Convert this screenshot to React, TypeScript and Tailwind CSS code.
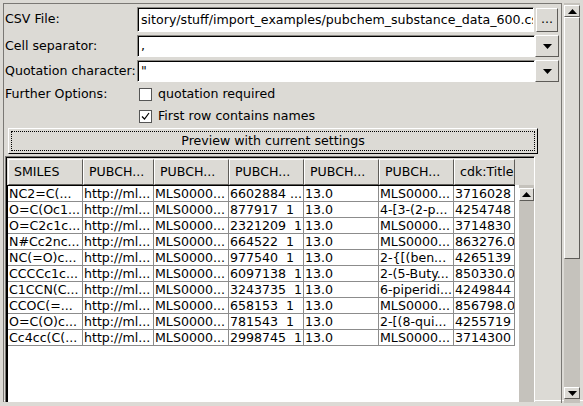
import React from "react";

const cols = [75, 71, 75, 75, 75, 75, 61];
const heads = ["SMILES", "PUBCH...", "PUBCH...", "PUBCH...", "PUBCH...", "PUBCH...", "cdk:Title"];

const rows = [
  ["NC2=C(...", "http://ml...", "MLS0000...", "6602884 ...", "13.0", "MLS0000...", "3716028"],
  ["O=C(Oc1...", "http://ml...", "MLS0000...", "877917  1", "13.0", "4-[3-(2-p...", "4254748"],
  ["O=C2c1c...", "http://ml...", "MLS0000...", "2321209  1", "13.0", "MLS0000...", "3714830"],
  ["N#Cc2nc...", "http://ml...", "MLS0000...", "664522  1", "13.0", "MLS0000...", "863276.0"],
  ["NC(=O)c...", "http://ml...", "MLS0000...", "977540  1", "13.0", "2-{[(ben...", "4265139"],
  ["CCCCc1c...", "http://ml...", "MLS0000...", "6097138  1", "13.0", "2-(5-Buty...", "850330.0"],
  ["C1CCN(C...", "http://ml...", "MLS0000...", "3243735  1", "13.0", "6-piperidi...", "4249844"],
  ["CCOC(=...", "http://ml...", "MLS0000...", "658153  1", "13.0", "MLS0000...", "856798.0"],
  ["O=C(O)c...", "http://ml...", "MLS0000...", "781543  1", "13.0", "2-[(8-qui...", "4255719"],
  ["Cc4cc(C(...", "http://ml...", "MLS0000...", "2998745  1", "13.0", "MLS0000...", "3714300"],
];

const Arrow = ({ down }: { down?: boolean }) => (
  <svg width="9" height="5" viewBox="0 0 9 5">
    <polygon points={down ? "0,0 9,0 4.5,5" : "0,5 9,5 4.5,0"} fill="#000" />
  </svg>
);

const Field = ({ children }: { children?: React.ReactNode }) => (
  <div className="flex-1 min-w-0 h-full border border-t-[#8a8884] border-l-[#8a8884] border-r-white border-b-white">
    <div className="h-full bg-white border-t border-l border-black flex items-center pl-[2px] overflow-hidden whitespace-nowrap">
      {children}
    </div>
  </div>
);

const Check = ({ on }: { on?: boolean }) => (
  <div className="w-[13px] h-[13px] shrink-0 bg-white border border-[#555] flex items-center justify-center">
    {on && (
      <svg width="9" height="9" viewBox="0 0 9 9">
        <path d="M1 4.5 L3.5 7 L8 1" stroke="#000" strokeWidth="1.2" fill="none" />
      </svg>
    )}
  </div>
);

const Raised = ({ className, children }: { className?: string; children?: React.ReactNode }) => (
  <div className={"bg-[#dcdad5] shrink-0 border border-t-white border-l-white border-r-[#5e5c58] border-b-[#5e5c58] flex items-center justify-center " + (className ?? "")}>
    {children}
  </div>
);

export default function App() {
  return (
    <div className="w-[583px] h-[406px] bg-[#dcdad5] text-black font-['DejaVu_Sans',sans-serif] text-[12.6px] overflow-hidden">
      <div className="flex pt-[3px] pl-[3px] h-[400px]">
        {/* main viewport */}
        <div className="w-[558px] h-[399px] border-l border-t border-[#7a7874] overflow-hidden flex flex-col">
          <div className="flex items-center h-[25px] mt-[3px] pr-[3px]">
            <div className="w-[133px] shrink-0 pl-[1px]">CSV File:</div>
            <Field>sitory/stuff/import_examples/pubchem_substance_data_600.csv</Field>
            <Raised className="w-[22px] h-[24px] ml-[2px]">...</Raised>
          </div>
          <div className="flex items-center h-[22px] mt-[3px] pr-[2px]">
            <div className="w-[133px] shrink-0 pl-[1px]">Cell separator:</div>
            <Field>,</Field>
            <Raised className="w-[24px] h-[22px]"><Arrow down /></Raised>
          </div>
          <div className="flex items-center h-[22px] mt-[3px] pr-[2px]">
            <div className="w-[133px] shrink-0 pl-[1px] whitespace-nowrap">Quotation character:</div>
            <Field>"</Field>
            <Raised className="w-[24px] h-[22px]"><Arrow down /></Raised>
          </div>
          <div className="flex items-center h-[22px] mt-[1px]">
            <div className="w-[135px] shrink-0 pl-[1px]">Further Options:</div>
            <Check />
            <span className="ml-[6px]">quotation required</span>
          </div>
          <div className="flex items-center h-[22px] pl-[135px]">
            <Check on />
            <span className="ml-[6px]">First row contains names</span>
          </div>
          <div className="ml-[4px] mr-[23px] mt-[1px] h-[26px] bg-[#dcdad5] border border-t-white border-l-white border-r-black border-b-black p-[2px]">
            <div className="h-full border border-dotted border-black flex items-center justify-center">
              Preview with current settings
            </div>
          </div>
          {/* table scroll pane */}
          <div className="ml-[1px] mr-[26px] mt-[2px] flex-1 border-l border-t border-[#7a7874] border-r border-r-white flex flex-col">
            <div className="border-l border-t border-black flex flex-col flex-1">
              <div className="flex h-[26px] ml-[1px] mt-[1px]">
                {heads.map((h, i) => (
                  <div
                    key={i}
                    style={{ width: cols[i] }}
                    className="h-full border border-t-white border-l-white border-r-[#5e5c58] border-b-[#5e5c58] flex items-center pl-[5px] whitespace-nowrap overflow-hidden"
                  >
                    {h}
                  </div>
                ))}
              </div>
              <div className="flex flex-1">
                <div className="w-[508px] bg-white border-t border-l border-black">
                  {rows.map((r, ri) => (
                    <div key={ri} className="flex h-[16px] border-b border-[#8c8c8c]">
                      {r.map((c, ci) => (
                        <div
                          key={ci}
                          style={{ width: cols[ci] }}
                          className="h-full border-r border-[#8c8c8c] pl-[1px] whitespace-pre overflow-hidden leading-[15px]"
                        >
                          {c}
                        </div>
                      ))}
                    </div>
                  ))}
                </div>
                <div className="w-[4px] bg-white"></div>
                <div className="w-[16px] bg-[#c5c2bc] flex flex-col">
                  <Raised className="h-[13px] mt-[3px]"><Arrow /></Raised>
                </div>
              </div>
            </div>
          </div>
        </div>
        {/* outer scrollbar */}
        <div className="w-[21px] h-[400px] flex">
          <div className="w-[1px] bg-[#7a7874]"></div>
          <div className="w-[2px]"></div>
          <div className="w-[16px] bg-[#c5c2bc] flex flex-col pt-[2px] pb-[4px]">
            <Raised className="h-[12px]"><Arrow /></Raised>
            <Raised className="h-[242px]"></Raised>
            <div className="flex-1"></div>
            <Raised className="h-[12px]"><Arrow down /></Raised>
          </div>
        </div>
      </div>
      <div className="h-[1px] bg-white ml-[3px]"></div>
    </div>
  );
}
